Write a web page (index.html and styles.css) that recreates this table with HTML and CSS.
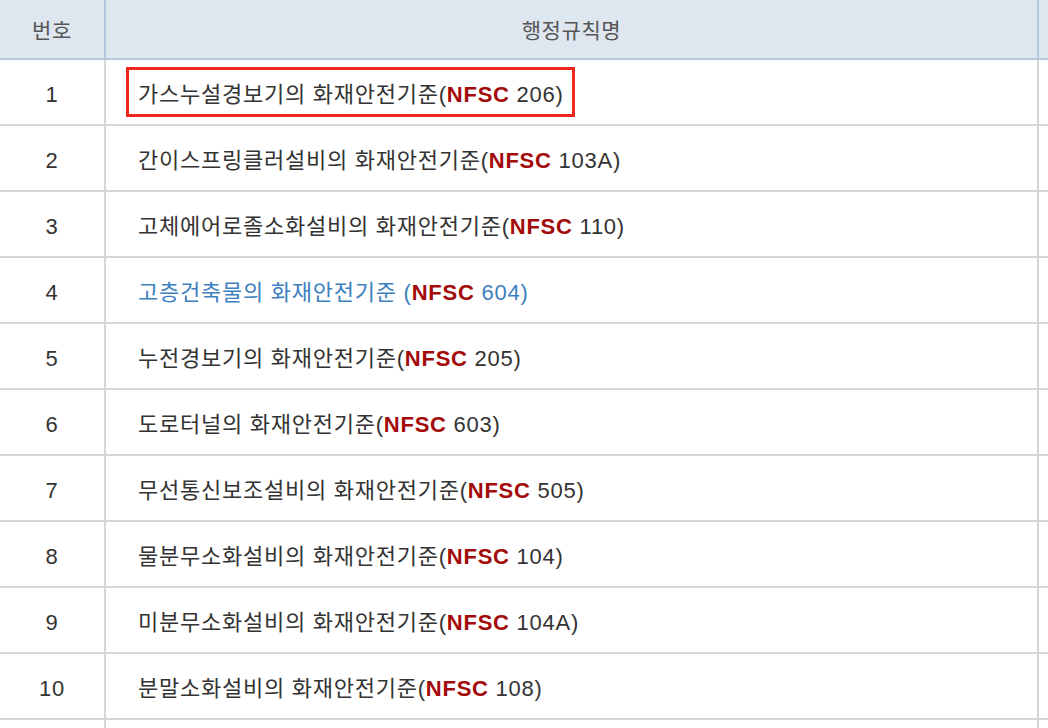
FILE: index.html
```html
<!DOCTYPE html>
<html lang="ko">
<head>
<meta charset="utf-8">
<link rel="stylesheet" href="styles.css">
</head>
<body>
<table class="rules">
  <thead>
    <tr>
      <th class="c-no">번호</th>
      <th class="c-name">행정규칙명</th>
      <th class="c-more"></th>
    </tr>
  </thead>
  <tbody>
    <tr><td class="c-no">1</td><td class="c-name"><span class="hl">가스누설경보기의 화재안전기준(<b>NFSC</b> 206)</span></td><td class="c-more"></td></tr>
    <tr><td class="c-no">2</td><td class="c-name">간이스프링클러설비의 화재안전기준(<b>NFSC</b> 103A)</td><td class="c-more"></td></tr>
    <tr><td class="c-no">3</td><td class="c-name">고체에어로졸소화설비의 화재안전기준(<b>NFSC</b> 110)</td><td class="c-more"></td></tr>
    <tr><td class="c-no">4</td><td class="c-name"><a class="link">고층건축물의 화재안전기준 (<b>NFSC</b> 604)</a></td><td class="c-more"></td></tr>
    <tr><td class="c-no">5</td><td class="c-name">누전경보기의 화재안전기준(<b>NFSC</b> 205)</td><td class="c-more"></td></tr>
    <tr><td class="c-no">6</td><td class="c-name">도로터널의 화재안전기준(<b>NFSC</b> 603)</td><td class="c-more"></td></tr>
    <tr><td class="c-no">7</td><td class="c-name">무선통신보조설비의 화재안전기준(<b>NFSC</b> 505)</td><td class="c-more"></td></tr>
    <tr><td class="c-no">8</td><td class="c-name">물분무소화설비의 화재안전기준(<b>NFSC</b> 104)</td><td class="c-more"></td></tr>
    <tr><td class="c-no">9</td><td class="c-name">미분무소화설비의 화재안전기준(<b>NFSC</b> 104A)</td><td class="c-more"></td></tr>
    <tr><td class="c-no">10</td><td class="c-name">분말소화설비의 화재안전기준(<b>NFSC</b> 108)</td><td class="c-more"></td></tr>
    <tr><td class="c-no"></td><td class="c-name"></td><td class="c-more"></td></tr>
  </tbody>
</table>
</body>
</html>
```

FILE: styles.css
```css
html, body {
  margin: 0;
  padding: 0;
  background: #ffffff;
  overflow: hidden;
  width: 1048px;
  height: 728px;
}
body {
  font-family: "Liberation Sans", "Noto Sans CJK KR", sans-serif;
  color: #333333;
}
.rules {
  border-collapse: separate;
  border-spacing: 0;
  table-layout: fixed;
  width: 1300px;
}
.rules th, .rules td {
  padding: 0;
  box-sizing: border-box;
}
.rules th {
  background: #dee6f0;
  border-bottom: 2px solid #b3c7dd;
  height: 60px;
  font-weight: normal;
  font-size: 21px;
  letter-spacing: 0.6px;
  color: #555555;
  text-align: center;
  vertical-align: middle;
}
.rules th.c-no, .rules th.c-name {
  border-right: 2px solid #b3c7dd;
}
.rules td {
  height: 66px;
  border-bottom: 2px solid #d6d6d6;
  font-size: 22px;
  letter-spacing: 0.75px;
  vertical-align: middle;
}
.rules td.c-no, .rules td.c-name {
  border-right: 2px solid #d6d6d6;
}
.c-no {
  width: 106px;
  text-align: center;
}
.rules td.c-no {
  color: #333333;
  padding-top: 5px;
}
.c-name {
  width: 933px;
}
.rules td.c-name {
  padding-left: 32px;
  white-space: nowrap;
}
.c-more {
  width: 261px;
}
b {
  color: #a30a0a;
  font-weight: bold;
}
.link {
  color: #3d80bf;
  text-decoration: none;
}
.hl {
  display: inline-block;
  border: 3px solid #f0261e;
  padding: 6px 8px 6px 9px;
  margin: -9px -11px -9px -12px;
}
```
